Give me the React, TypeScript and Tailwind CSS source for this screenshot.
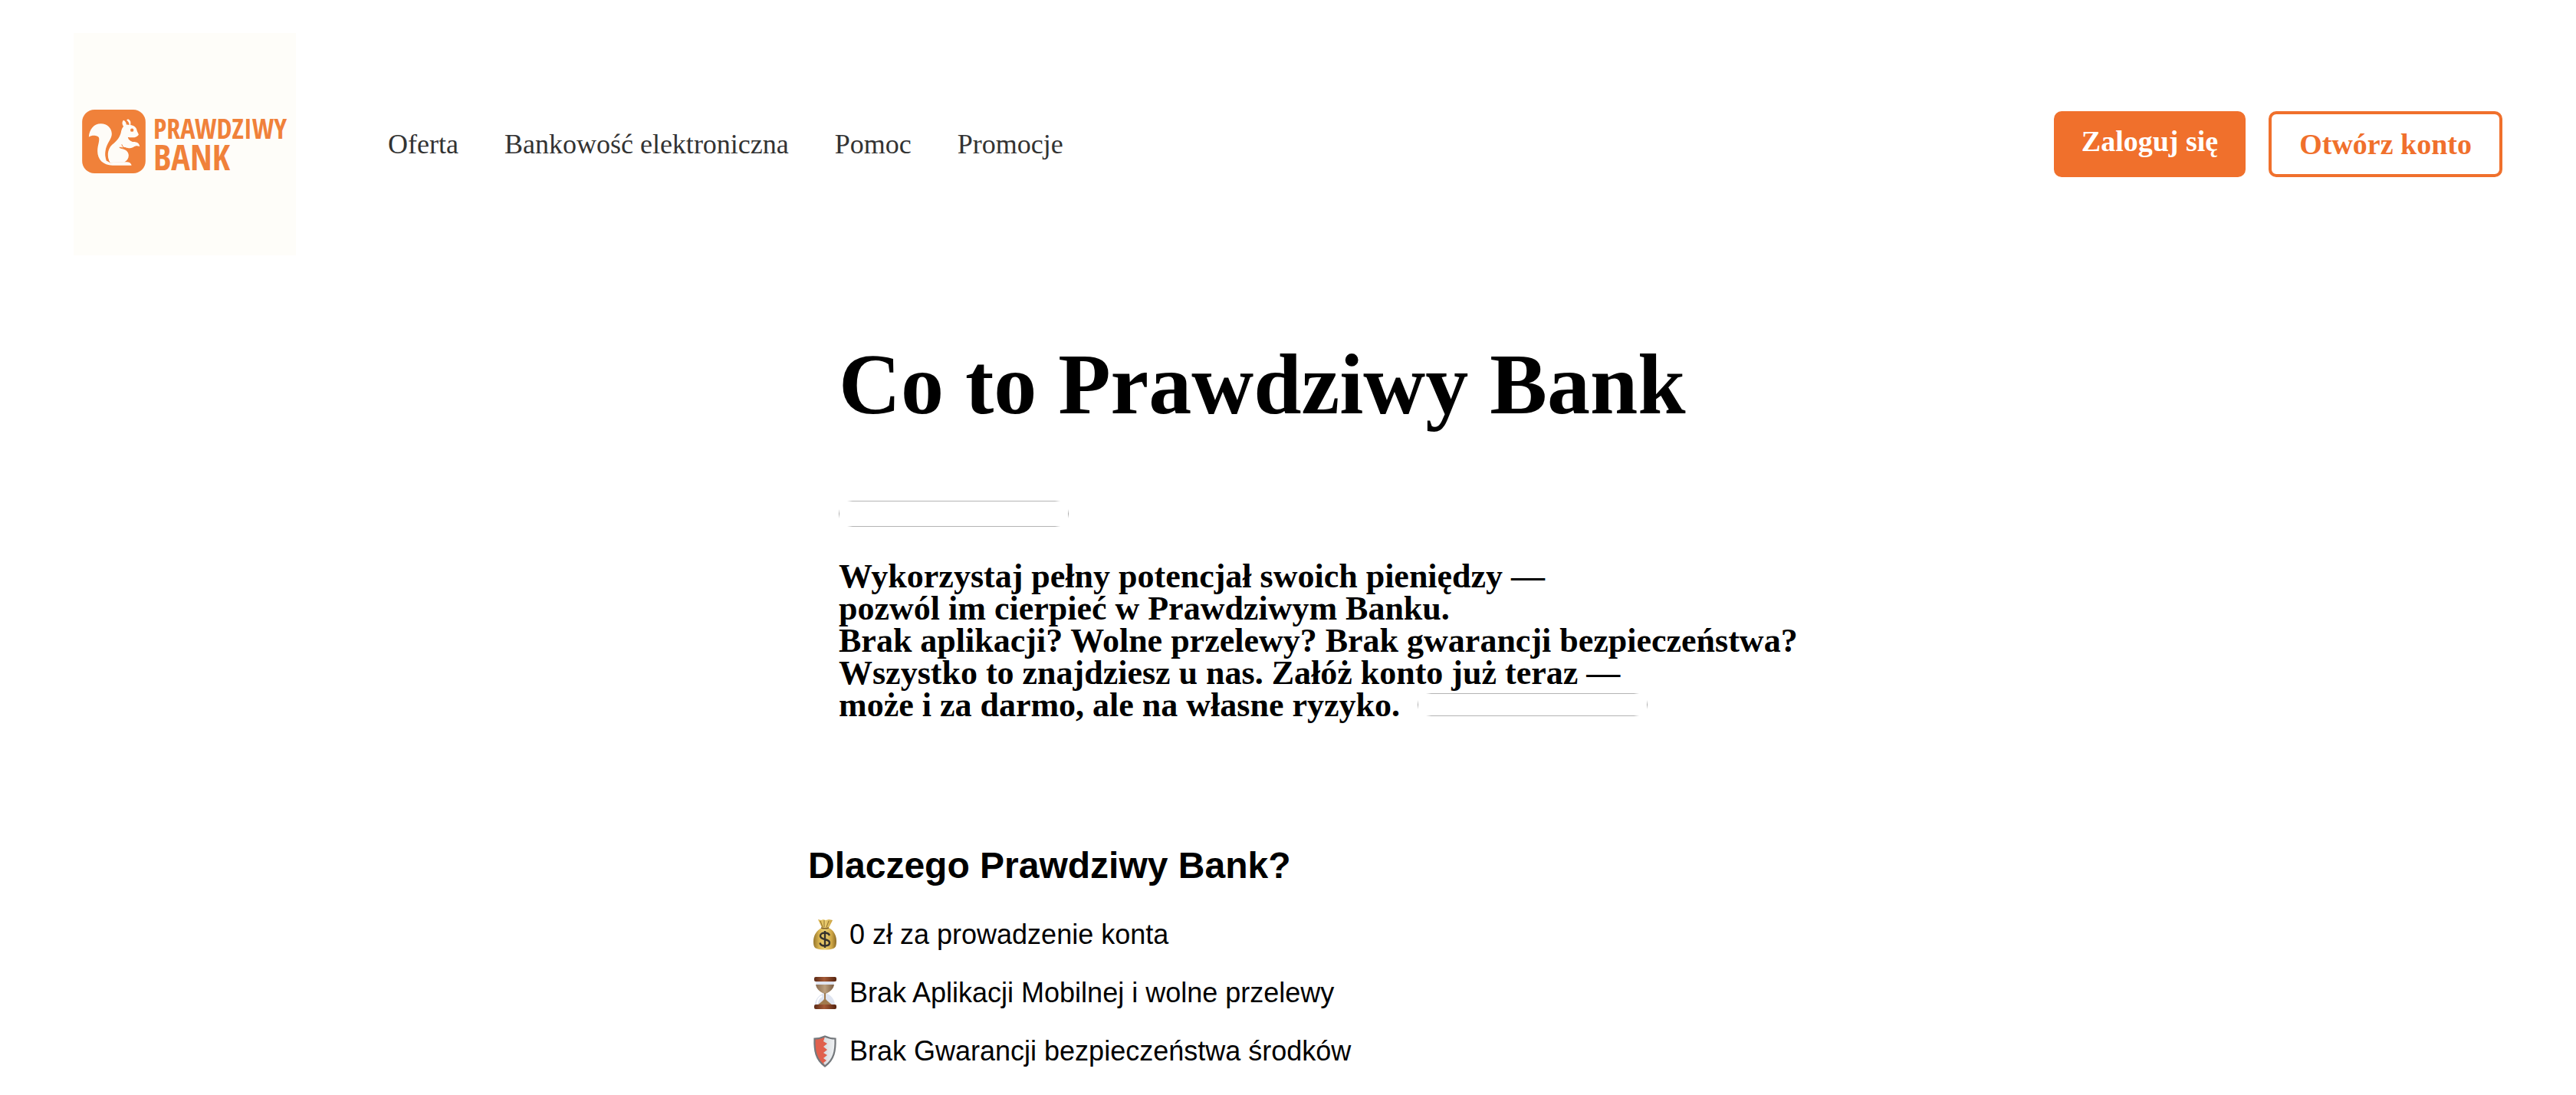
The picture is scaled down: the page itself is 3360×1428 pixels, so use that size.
import type { ReactNode } from "react";

function SquirrelMark() {
  return (
    <svg viewBox="22 21 248 249" className="size-[83px] shrink-0" aria-hidden="true">
      <rect x="22" y="21" width="248" height="249" rx="48" fill="#f0813a" />
      <g fill="#fefcf8">
        <path d="M48 128C50 98 68 76 95 76C121 76 138 94 138 116C138 136 116 154 113 184C111 206 118 220 130 229L190 226C204 225 214 229 215 239H141C104 239 82 216 82 184C82 160 90 148 88 132C86 122 62 118 48 128Z" />
        <path d="M131 228C119 206 119 178 139 158C158 144 171 128 175 104C177 96 180 90 184 86C177 78 178 66 184 62C191 65 195 72 195 80C198 79 203 80 206 81C207 74 202 66 196 62C199 57 205 58 209 64C213 69 212 76 211 81C223 82 234 90 236 101C237 108 243 114 243 119C239 126 229 130 219 130C211 130 205 129 201 129C203 137 207 142 219 147C236 146 246 152 247 165C236 161 230 163 223 167C211 173 199 172 190 169C186 174 180 173 176 174C192 176 204 186 204 200C204 212 197 221 186 227Z" />
      </g>
      <path d="M117 221C109 198 111 172 137 147C120 168 116 198 128 226Z" fill="#f0813a" />
      <circle cx="217" cy="101" r="6.5" fill="#f0813a" />
      <path d="M177 157C179 165 184 170 192 171C184 169 175 169 168 169C174 173 182 174 190 172" fill="none" stroke="#f0813a" strokeWidth="3" />
    </svg>
  );
}

function Logo() {
  return (
    <a
      href="#"
      aria-label="Prawdziwy Bank"
      className="flex size-[290px] shrink-0 items-center gap-[10px] bg-[#fefdf9] pb-2 pl-[11px]"
    >
      <SquirrelMark />
      <span className="flex flex-col pt-1 font-['Open_Sans_Condensed','Roboto_Condensed',sans-serif] font-bold text-[#f0813a]">
        <span className="text-4xl leading-[36px]">PRAWDZIWY</span>
        <span className="text-[46px] leading-[36px]">BANK</span>
      </span>
    </a>
  );
}

function PlaceholderBox({ className, id, h }: { className: string; id: string; h: number }) {
  const mid = h / 2;
  return (
    <svg viewBox={`0 0 300 ${h}`} className={className} aria-hidden="true">
      <defs>
        <linearGradient id={`${id}-x`}>
          <stop offset="0" stopColor="#b4b4b4" stopOpacity="0" />
          <stop offset=".025" stopColor="#b4b4b4" />
          <stop offset=".975" stopColor="#b4b4b4" />
          <stop offset="1" stopColor="#b4b4b4" stopOpacity="0" />
        </linearGradient>
        <linearGradient id={`${id}-y`} x2="0" y2="1">
          <stop offset="0" stopColor="#aaaaaa" stopOpacity="0" />
          <stop offset=".5" stopColor="#aaaaaa" />
          <stop offset="1" stopColor="#aaaaaa" stopOpacity="0" />
        </linearGradient>
      </defs>
      <rect x="11" y="0" width="278" height="1" fill={`url(#${id}-x)`} />
      <rect x="11" y={h - 1} width="278" height="1" fill={`url(#${id}-x)`} />
      <rect x="0" y={mid - 6} width="1" height="12" fill={`url(#${id}-y)`} />
      <rect x="299" y={mid - 6} width="1" height="12" fill={`url(#${id}-y)`} />
    </svg>
  );
}

function MoneyBag() {
  return (
    <svg viewBox="0 0 44 44" className="size-11 shrink-0" aria-hidden="true">
      <defs>
        <linearGradient id="bag">
          <stop offset="0" stopColor="#96762c" />
          <stop offset=".25" stopColor="#d9b450" />
          <stop offset=".5" stopColor="#ecd074" />
          <stop offset=".8" stopColor="#cda544" />
          <stop offset="1" stopColor="#8b6a26" />
        </linearGradient>
      </defs>
      <path d="M13 2l4 1 3-1 3 1 4-1 5 1-5 10c6 3 10 9 10 17 0 6-1 9-4 10-6 2-16 2-22 0-3-1-4-4-4-9 0-8 4-15 11-18Z" fill="url(#bag)" />
      <path d="M16 4l3 8M21 3v9M27 4l-3 8" stroke="#8f6e2b" fill="none" />
      <path d="M17 13c3 1 7 1 10 0" stroke="#80602a" strokeWidth="1.5" fill="none" />
      <path d="M28 23c-1-3-4-3.500-6-3.500-3 0-6 1.500-6 4 0 6 12 3 12 9 0 3-3 4-6 4-3 0-6-1-6.500-4M22 17v22" stroke="#37332d" strokeWidth="2.4" fill="none" />
    </svg>
  );
}

function Hourglass() {
  return (
    <svg viewBox="0 0 44 44" className="size-11 shrink-0" aria-hidden="true">
      <defs>
        <linearGradient id="wood">
          <stop offset="0" stopColor="#5d2b17" />
          <stop offset=".45" stopColor="#a45a36" />
          <stop offset="1" stopColor="#54230f" />
        </linearGradient>
        <linearGradient id="sand">
          <stop offset="0" stopColor="#8c6f54" />
          <stop offset=".5" stopColor="#bb9f7e" />
          <stop offset="1" stopColor="#7b5d42" />
        </linearGradient>
      </defs>
      <path d="M10 5h24c0 10-4 14-10 17.500C30 25 35 30 35 38H9c0-8 5-13 11-15.500C14 19 10 15 10 5Z" fill="#dfe4f0" />
      <path d="M10 11h24c-1 6-5 9-10 11.500h-4C15 20 11 17 10 11Z" fill="url(#sand)" />
      <path d="M21 22h2v8c2 3 6 5 9 8H12c3-3 7-5 9-8Z" fill="#a17a4d" />
      <path d="M12 36c0-5 2-8 6-10" stroke="#fff" strokeWidth="2" fill="none" />
      <rect x="8" y="1" width="29" height="6" rx="2" fill="url(#wood)" />
      <rect x="8" y="37" width="29" height="6" rx="2" fill="url(#wood)" />
    </svg>
  );
}

function Shield() {
  return (
    <svg viewBox="0 0 44 44" className="size-11 shrink-0" aria-hidden="true">
      <defs>
        <linearGradient id="steel">
          <stop offset="0" stopColor="#c3c7cc" />
          <stop offset="1" stopColor="#f2f4f6" />
        </linearGradient>
      </defs>
      <path d="M22 2c4 2 9 3 14 3 1 17-2 29-14 37C10 34 7 22 8 5c5 0 10-1 14-3Z" fill="url(#steel)" />
      <path d="M22 3c-4 2-9 3-13 3-1 16 2 27 13 34l-2-3 4-3-4-3 5-4-5-3 5-4-5-4 5-4-5-3Z" fill="#e0604d" />
      <path d="M22 2.500c4 2 9 3 13.500 3C36 21 34 33 22 41.500 10 33 8 21 8.500 5.500c4.500 0 9.500-1 13.500-3Z" fill="none" stroke="#74787c" strokeWidth="2.2" />
    </svg>
  );
}

const links = ["Oferta", "Bankowość elektroniczna", "Pomoc", "Promocje"];

const reasons: { icon: ReactNode; text: string }[] = [
  { icon: <MoneyBag />, text: "0 zł za prowadzenie konta" },
  { icon: <Hourglass />, text: "Brak Aplikacji Mobilnej i wolne przelewy" },
  { icon: <Shield />, text: "Brak Gwarancji bezpieczeństwa środków" },
];

export default function App() {
  return (
    <div className="bg-white font-['Liberation_Serif','Times_New_Roman',serif] text-black">
      <header className="flex items-center px-24 pt-[43px]">
        <Logo />
        <nav className="ml-[120px] flex gap-[60px] text-4xl text-[#333333]">
          {links.map((label) => (
            <a key={label} href="#" className="whitespace-nowrap">
              {label}
            </a>
          ))}
        </nav>
        <div className="ml-auto flex gap-[30px] text-[38px] leading-[44px] font-bold">
          <button type="button" className="h-[86px] rounded-[10px] bg-[#f0702c] px-9 pb-2 whitespace-nowrap text-white">
            Zaloguj się
          </button>
          <button type="button" className="h-[86px] rounded-[10px] border-4 border-[#f0702c] px-9 whitespace-nowrap text-[#f0702c]">
            Otwórz konto
          </button>
        </div>
      </header>

      <main className="mx-auto max-w-[1252px]">
        <section className="px-10 pt-[104px] font-bold">
          <h1 className="text-[112px] leading-[128px] whitespace-nowrap">Co to Prawdziwy Bank</h1>
          <PlaceholderBox id="top" h={34} className="mt-[88px] h-[34px] w-[300px]" />
          <p className="mt-11 text-[44px] leading-[42px] whitespace-nowrap">
            Wykorzystaj pełny potencjał swoich pieniędzy —<br />
            pozwól im cierpieć w Prawdziwym Banku.
            <br />
            Brak aplikacji? Wolne przelewy? Brak gwarancji bezpieczeństwa?
            <br />
            Wszystko to znajdziesz u nas. Załóż konto już teraz —<br />
            może i za darmo, ale na własne ryzyko.{" "}
            <PlaceholderBox id="end" h={30} className="ml-3 inline h-[30px] w-[300px] align-baseline" />
          </p>
        </section>

        <section className="pt-40 pb-4 font-['Liberation_Sans',Arial,sans-serif]">
          <h2 className="text-5xl leading-[56px] font-bold">Dlaczego Prawdziwy Bank?</h2>
          <ul className="mt-10 flex flex-col gap-8 text-4xl leading-[44px]">
            {reasons.map(({ icon, text }) => (
              <li key={text} className="flex items-center gap-[10px]">
                {icon}
                {text}
              </li>
            ))}
          </ul>
        </section>
      </main>
    </div>
  );
}
